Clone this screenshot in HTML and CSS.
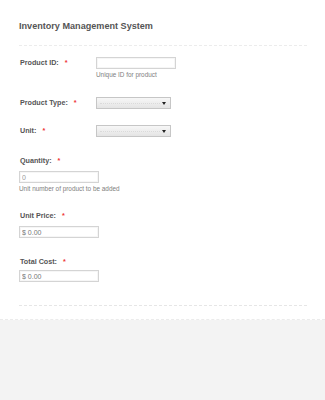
FILE: index.html
```html
<!DOCTYPE html>
<html>
<head>
<meta charset="utf-8">
<link rel="stylesheet" href="styles.css">
</head>
<body>
<div class="form">
  <div class="header">Inventory Management System</div>

  <div class="line row first">
    <div class="label">Product ID:<span class="req">*</span></div>
    <div class="control">
      <input class="input w80" type="text" value="">
      <div class="help">Unique ID for product</div>
    </div>
  </div>

  <div class="line row l2">
    <div class="label">Product Type:<span class="req">*</span></div>
    <div class="control">
      <div class="select"></div>
    </div>
  </div>

  <div class="line row l3">
    <div class="label">Unit:<span class="req">*</span></div>
    <div class="control">
      <div class="select"></div>
    </div>
  </div>

  <div class="line col l4">
    <div class="label">Quantity:<span class="req">*</span></div>
    <input class="input w80 tight" type="text" value="0">
    <div class="help">Unit number of product to be added</div>
  </div>

  <div class="line col l5">
    <div class="label">Unit Price:<span class="req">*</span></div>
    <input class="input w80 tight price" type="text" value="$ 0.00">
  </div>

  <div class="line col l6">
    <div class="label">Total Cost:<span class="req">*</span></div>
    <input class="input w80 tight price" type="text" value="$ 0.00">
  </div>

  <div class="bottom-rule"></div>
</div>
</body>
</html>
```

FILE: styles.css
```css
html, body {
  margin: 0;
  padding: 0;
}
body {
  background: #f3f3f3;
  font-family: "Liberation Sans", Arial, sans-serif;
  color: #555;
}
.form {
  background: #fff;
  padding: 0 18px 0 19px;
  height: 319px;
  border-bottom: 1px dashed #ebebeb;
}
.header {
  padding-top: 20px;
  font-size: 9.1px;
  line-height: 12px;
  font-weight: bold;
  color: #555;
  height: 12px;
  padding-bottom: 13px;
  border-bottom: 1px dashed #ececec;
}
.row {
  display: flex;
  align-items: flex-start;
}
.col {
  display: flex;
  flex-direction: column;
  align-items: flex-start;
}
.label {
  font-size: 7.2px;
  line-height: 12px;
  font-weight: bold;
  color: #555;
  padding-left: 1px;
}
.row .label {
  width: 76px;
}
.req {
  color: #e33;
  margin-left: 6px;
}
.control {
  display: flex;
  flex-direction: column;
}
.input {
  box-sizing: border-box;
  height: 12px;
  border: 1px solid #d4d4d4;
  box-shadow: inset 0 0 0 1px #f6f6f6;
  padding: 0 2px;
  margin: 0;
  font-family: "Liberation Sans", Arial, sans-serif;
  font-size: 7px;
  color: #999;
  background: #fff;
  outline: none;
}
.w80 {
  width: 80px;
}
.price {
  color: #777;
}
.help {
  font-size: 6.4px;
  line-height: 8px;
  margin-top: 2px;
  color: #808080;
}
.select {
  position: relative;
  box-sizing: border-box;
  width: 75px;
  height: 12px;
  border: 1px solid #c6c6c6;
  background: linear-gradient(#f7f7f7, #e4e4e4);
}
.select::before {
  content: "";
  position: absolute;
  left: 3px;
  right: 10px;
  top: 5px;
  border-top: 1px dotted #dadada;
}
.select::after {
  content: "";
  position: absolute;
  right: 4px;
  top: 4px;
  border-left: 2px solid transparent;
  border-right: 2px solid transparent;
  border-top: 3px solid #222;
}
.first { margin-top: 11px; }
.l2 { margin-top: 18px; }
.l3 { margin-top: 16px; }
.l4 { margin-top: 18px; }
.l4 .input { margin-top: 4px; }
.l5 { margin-top: 17px; }
.l5 .input { margin-top: 4px; }
.l6 { margin-top: 18px; }
.l6 .input { margin-top: 2px; }
.bottom-rule {
  margin-top: 23px;
  border-top: 1px dashed #e6e6e6;
}
```
